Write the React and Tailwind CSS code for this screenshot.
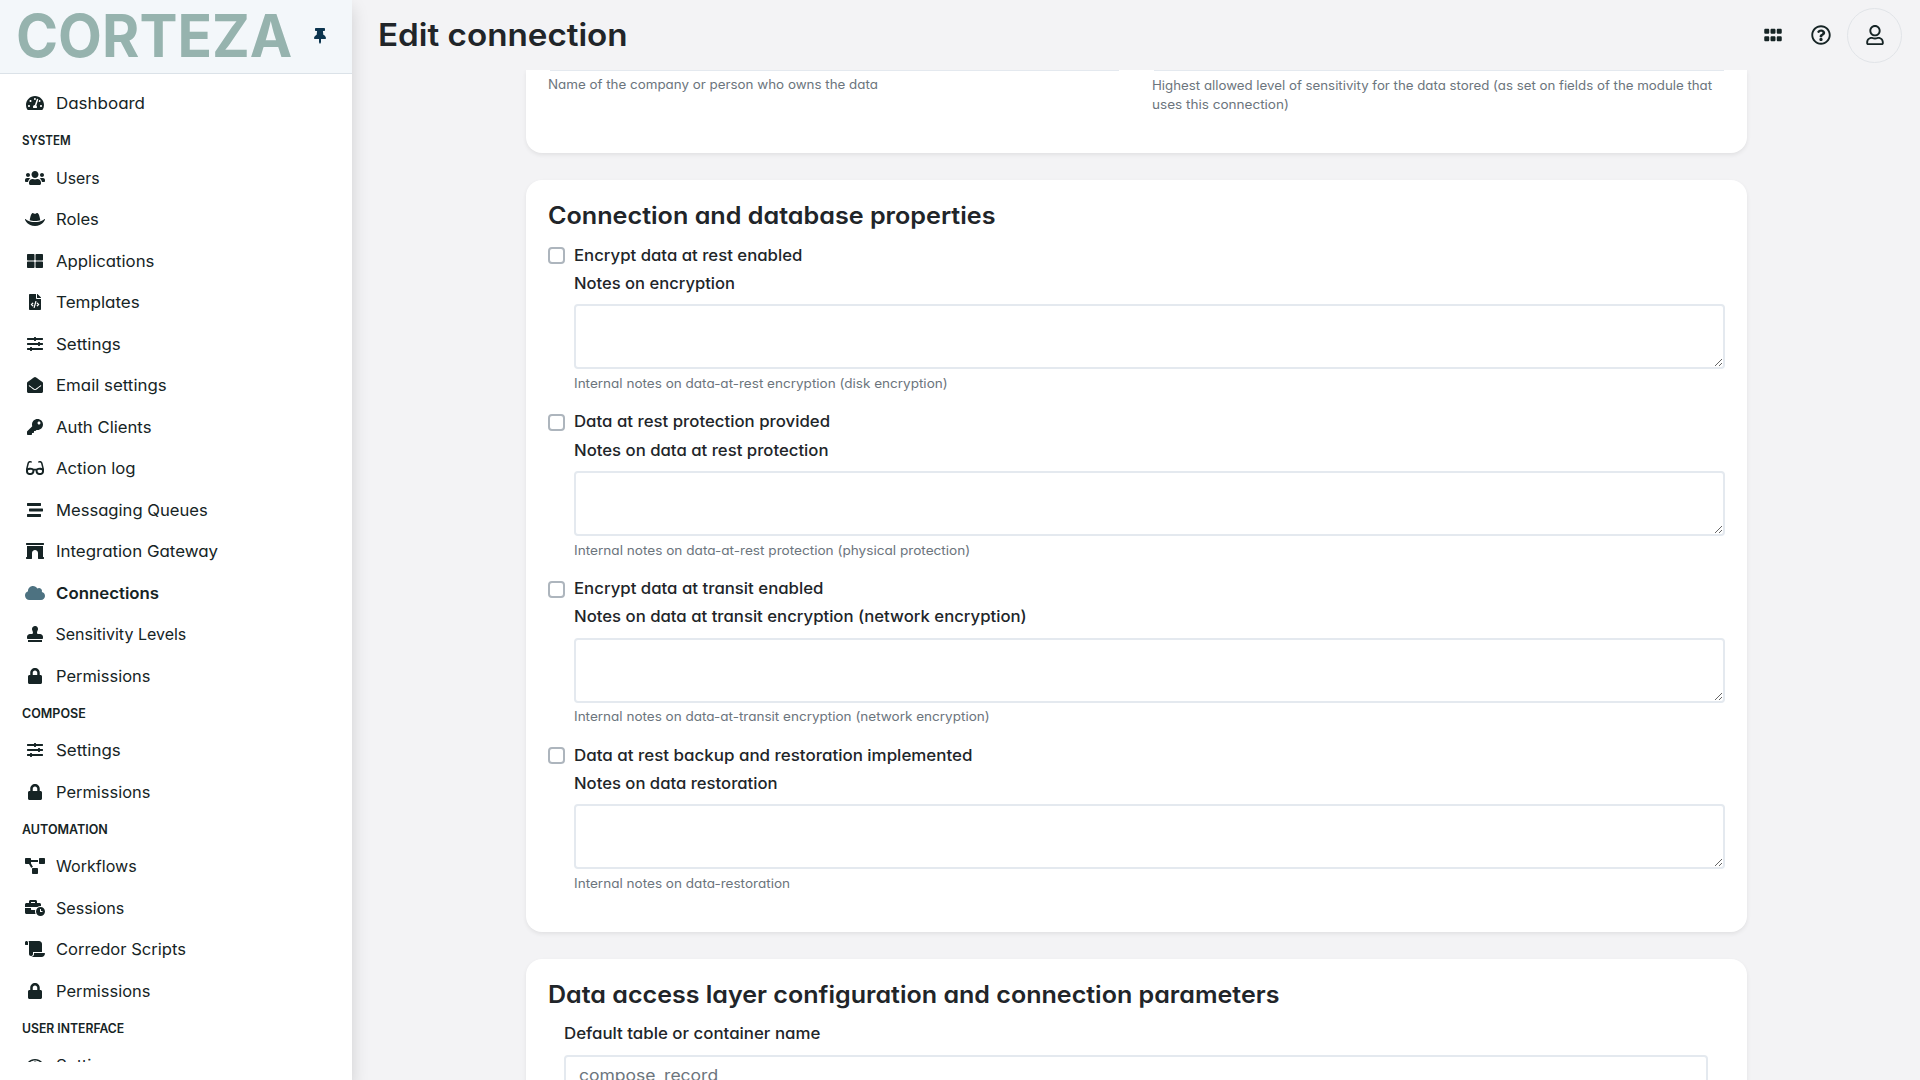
import { useLayoutEffect, useRef } from "react";
import {
  FaTachometerAlt, FaUsers, FaHatCowboy, FaThLarge, FaFileCode, FaSlidersH,
  FaEnvelopeOpen, FaKey, FaGlasses, FaStream, FaArchway, FaCloud, FaStamp,
  FaLock, FaProjectDiagram, FaBusinessTime, FaScroll, FaThumbtack,
  FaGripHorizontal, FaRegQuestionCircle, FaRegUser, FaRegEye,
} from "react-icons/fa";

// One line of text whose letters are widened so that it spans `w` pixels.
function Line({ w, children, className = "" }) {
  const ref = useRef(null);
  useLayoutEffect(() => {
    const el = ref.current;
    el.style.transform = `scaleX(${w / el.offsetWidth})`;
  }, [w, children]);
  return (
    <span ref={ref} className={`inline-block w-max origin-left whitespace-nowrap ${className}`}>
      {children}
    </span>
  );
}

const NAV = [
  { items: [["Dashboard", 89, FaTachometerAlt]] },
  {
    title: ["SYSTEM", 49],
    items: [
      ["Users", 43.5, FaUsers],
      ["Roles", 42.5, FaHatCowboy],
      ["Applications", 98.5, FaThLarge],
      ["Templates", 84, FaFileCode],
      ["Settings", 64.5, FaSlidersH],
      ["Email settings", 110.5, FaEnvelopeOpen],
      ["Auth Clients", 95, FaKey],
      ["Action log", 79.5, FaGlasses],
      ["Messaging Queues", 151.5, FaStream],
      ["Integration Gateway", 162.5, FaArchway],
      ["Connections", 103, FaCloud, true],
      ["Sensitivity Levels", 131, FaStamp],
      ["Permissions", 94.5, FaLock],
    ],
  },
  { title: ["COMPOSE", 64], items: [["Settings", 64.5, FaSlidersH], ["Permissions", 94.5, FaLock]] },
  {
    title: ["AUTOMATION", 86],
    items: [
      ["Workflows", 80.5, FaProjectDiagram],
      ["Sessions", 68.5, FaBusinessTime],
      ["Corredor Scripts", 129.5, FaScroll],
      ["Permissions", 94.5, FaLock],
    ],
  },
  { title: ["USER INTERFACE", 102.5], items: [["Settings", 64.5, FaRegEye]] },
];

const PROPERTIES = [
  ["Encrypt data at rest enabled", 228, "Notes on encryption", 160.5, "Internal notes on data-at-rest encryption (disk encryption)", 374],
  ["Data at rest protection provided", 256, "Notes on data at rest protection", 254, "Internal notes on data-at-rest protection (physical protection)", 396.5],
  ["Encrypt data at transit enabled", 249.5, "Notes on data at transit encryption (network encryption)", 452.5, "Internal notes on data-at-transit encryption (network encryption)", 416],
  ["Data at rest backup and restoration implemented", 399, "Notes on data restoration", 204, "Internal notes on data-restoration", 216],
];

function Sidebar() {
  return (
    <aside className="relative z-20 flex h-full w-[352px] shrink-0 flex-col bg-white text-[#162425] shadow-[0_8px_16px_rgba(0,0,0,0.15)]">
      <div className="flex h-[74px] shrink-0 items-center justify-between border-b border-[#dbe2e8] bg-[#f3f7fa] pr-[24px] pl-[16px]">
        <Line w={276} className="mb-[2px] text-[59px] leading-[70px] font-bold text-[#96b3ae]">CORTEZA</Line>
        <FaThumbtack className="mb-[2px] size-4 text-[#0b344e]" />
      </div>
      <nav className="h-[988px] overflow-hidden pt-[8.5px]">
        {NAV.map((group, i) => (
          <section key={i}>
            {group.title && (
              <h2 className="h-[33px] pl-[22px] text-[12.5px] leading-[33px] font-semibold">
                <Line w={group.title[1]}>{group.title[0]}</Line>
              </h2>
            )}
            {group.items.map(([label, w, Icon, active]) => (
              <div key={label} className="flex h-[41.5px] items-center pl-[25px]">
                <Icon className={active ? "h-4 w-5 shrink-0 text-[#4d7281]" : "h-4 w-5 shrink-0"} />
                <Line w={w} className={active ? "ml-[10.5px] leading-6 font-semibold" : "ml-[10.5px] leading-6"}>
                  {label}
                </Line>
              </div>
            ))}
          </section>
        ))}
      </nav>
    </aside>
  );
}

function Topbar() {
  return (
    <header className="z-10 flex h-[70px] shrink-0 items-center bg-[#f3f3f5] pr-[18px] pl-[26px] text-[#162425]">
      <h1 className="text-[31px] leading-9 font-semibold text-[#212529]">
        <Line w={249.5}>Edit connection</Line>
      </h1>
      <FaGripHorizontal className="ml-auto size-5" />
      <FaRegQuestionCircle className="ml-[28.5px] size-5" />
      <div className="ml-[16px] flex size-[55px] items-center justify-center rounded-full border border-[#e1e4e8]">
        <FaRegUser className="size-5" />
      </div>
    </header>
  );
}

function Card({ className, children }) {
  return (
    <section className={`w-[1221px] shrink-0 rounded-2xl bg-white px-[21.5px] shadow-[0_2px_4px_rgba(0,0,0,0.075)] ${className}`}>
      {children}
    </section>
  );
}

function Property({ data }) {
  const [label, lw, notes, nw, help, hw] = data;
  return (
    <div className="h-[166.75px]">
      <label className="flex h-6 items-center">
        <input type="checkbox" className="mt-[2px] size-[17px] appearance-none rounded-[4px] border-2 border-[#adb5bd]" />
        <Line w={lw} className="ml-[9px] leading-6 font-medium">{label}</Line>
      </label>
      <div className="flex flex-col items-start pt-[4.2px] pl-[26.5px]">
        <Line w={nw} className="leading-6 font-medium">{notes}</Line>
        <textarea className="mt-[9.4px] block h-[65px] w-[1151px] resize-y rounded-[4px] border-2 border-[#e4e9ef]" />
        <Line w={hw} className="mt-[4.6px] text-[12.8px] leading-[19px] text-[#6c757d]">{help}</Line>
      </div>
    </div>
  );
}

export default function App() {
  return (
    <div className="flex h-[1080px] w-[1920px] overflow-hidden bg-[#f3f3f5] font-[Inter,sans-serif] text-base text-[#212529] [font-feature-settings:'cv11']">
      <Sidebar />
      <div className="flex min-w-0 flex-1 flex-col">
        <Topbar />
        <main className="flex flex-1 flex-col items-center gap-[27px] overflow-hidden pl-[1px]">
          <Card className="h-[83px] rounded-t-none text-[12.8px] leading-[19px] text-[#6c757d]">
            <div className="grid grid-cols-2 gap-[31px]">
              <div>
                <div className="mx-[2px] h-px bg-[#e4e9ef]" />
                <Line w={330} className="mt-[4px]">Name of the company or person who owns the data</Line>
              </div>
              <div>
                <div className="mx-[2px] h-px bg-[#e4e9ef]" />
                <Line w={560} className="mt-[5px] block">
                  Highest allowed level of sensitivity for the data stored (as set on fields of the module that
                </Line>
                <Line w={136.5} className="block">uses this connection)</Line>
              </div>
            </div>
          </Card>
          <Card className="h-[752px] pt-[22px]">
            <h2 className="mb-[12.6px] text-[24px] leading-7 font-semibold">
              <Line w={447.5}>Connection and database properties</Line>
            </h2>
            {PROPERTIES.map((p) => <Property key={p[0]} data={p} />)}
          </Card>
          <Card className="h-[400px] pt-[22px]">
            <h2 className="text-[24px] leading-7 font-semibold">
              <Line w={731}>Data access layer configuration and connection parameters</Line>
            </h2>
            <div className="flex flex-col items-start px-[16.5px] pt-[12.4px]">
              <Line w={256} className="leading-6 font-medium">Default table or container name</Line>
              <div className="mt-[9.6px] h-[44px] w-[1144px] rounded-[4px] border-2 border-[#e4e9ef] pt-[6px] pl-[13px] text-[#6c757d]">
                <Line w={139} className="leading-6">compose_record</Line>
              </div>
            </div>
          </Card>
        </main>
      </div>
    </div>
  );
}
